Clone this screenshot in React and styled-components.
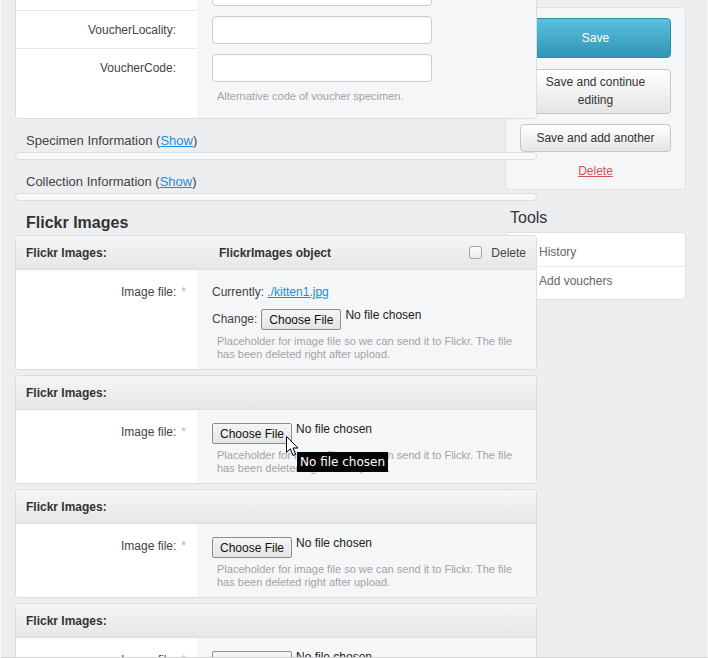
import React from "react";
import styled, { createGlobalStyle } from "styled-components";

const GlobalStyle = createGlobalStyle`
  html, body {
    margin: 0;
    padding: 0;
    height: 658px;
    overflow: hidden;
  }
  body {
    background: #edeef0;
    font-family: "Liberation Sans", Arial, sans-serif;
    font-size: 12px;
    color: #444;
  }
  * {
    box-sizing: border-box;
  }
`;

const Frame = styled.div`
  height: 658px;
  overflow: hidden;
  border-left: 1px solid #f8f8f9;
  border-right: 1px solid #f6f6f7;
  border-bottom: 1px solid #d3d4d6;
`;

const Columns = styled.div`
  display: flex;
  align-items: flex-start;
  margin-top: -29px;
  padding-left: 14px;
`;

const Main = styled.div`
  width: 522px;
  flex-shrink: 0;
  position: relative;
  z-index: 1;
`;

const Sidebar = styled.div`
  width: 181px;
  flex-shrink: 0;
  margin-left: -32px;
  margin-top: 36px;
`;

/* fieldset module */
const Module = styled.div`
  background: #fff;
  border: 1px solid #dcdde0;
  border-radius: 4px;
  overflow: hidden;
`;

const FormRow = styled.div`
  display: grid;
  grid-template-columns: 181px 1fr;
`;

const LabelCell = styled.div`
  background: #fff;
  text-align: right;
  line-height: 14px;
  color: #444;
  padding: ${(p) => (p.$inline ? "15px 11px 0 0" : "12px 21px 0 0")};
  border-top: ${(p) => (p.$first ? "none" : "1px solid #e6e7e9")};
`;

const Required = styled.span`
  color: #b5b5b5;
  margin-left: 5px;
`;

const FieldCell = styled.div`
  background: #f5f6f8;
  padding: ${(p) => (p.$inline ? "13px 15px 9px 15px" : "6px 15px 4px 15px")};
  padding-bottom: ${(p) => (p.$help && !p.$inline ? "15px" : undefined)};
`;

const TextInput = styled.input`
  display: block;
  width: 220px;
  height: 28px;
  border: 1px solid #cbccce;
  border-radius: 4px;
  background: #fff;
  box-shadow: inset 0 1px 1px rgba(0, 0, 0, 0.04);
  font: inherit;
  padding: 0 6px;
  margin: 0;
`;

const Help = styled.div`
  font-size: 11px;
  color: #a2a3a5;
  padding-left: 5px;
  margin-top: ${(p) => (p.$inline ? "5px" : "7px")};
  line-height: ${(p) => (p.$inline ? "12.5px" : "14px")};
`;

/* collapsed fieldsets */
const SectionTitle = styled.div`
  margin: 13px 0 3px 11px;
  font-size: 13px;
  line-height: 17px;
  color: #444;
`;

const Link = styled.a`
  color: #1b8dd4;
  text-decoration: underline;
  cursor: pointer;
`;

const CollapsedBar = styled.div`
  height: 8px;
  background: #f7f8f9;
  border: 1px solid #dcdde0;
  border-radius: 4px;
`;

const GroupHeading = styled.h2`
  margin: 12px 0 2px 11px;
  font-size: 16px;
  line-height: 20px;
  font-weight: bold;
  color: #333;
`;

/* inline groups */
const Inline = styled.div`
  background: #fff;
  border: 1px solid #dcdde0;
  border-radius: 4px;
  overflow: hidden;
  margin-bottom: 5px;
`;

const InlineHeader = styled.div`
  display: flex;
  align-items: center;
  height: 34px;
  padding: 0 10px 0 10px;
  background: linear-gradient(#f6f6f6, #e6e6e6);
  border-bottom: 1px solid #dcdde0;
  font-weight: bold;
  color: #333;
`;

const InlineTitle = styled.span`
  flex: 0 0 193px;
`;

const InlineObject = styled.span`
  flex: 1;
`;

const DeleteToggle = styled.label`
  display: flex;
  align-items: center;
  font-weight: normal;
  color: #444;
`;

const CheckBox = styled.span`
  width: 13px;
  height: 13px;
  margin-right: 9px;
  border: 1px solid #a5a6a8;
  border-radius: 3px;
  background: linear-gradient(#fafafa, #ebebeb);
`;

const Currently = styled.div`
  line-height: 18px;
  color: #444;
`;

const FileRow = styled.div`
  position: relative;
  display: flex;
  align-items: flex-start;
  margin-top: ${(p) => (p.$afterText ? "8px" : "0")};
`;

const ChangeLabel = styled.span`
  line-height: 21px;
  margin-right: 4px;
  color: #444;
`;

const FileButton = styled.button`
  height: 21px;
  width: 80px;
  padding: 0;
  border: 1px solid #8d8d8d;
  border-radius: 2px;
  background: linear-gradient(#f5f5f5, #e4e4e4);
  font-family: "Liberation Sans", Arial, sans-serif;
  font-size: 12px;
  color: #111;
`;

const FileStatus = styled.span`
  margin-left: 4px;
  line-height: 13px;
  color: #222;
`;

const Tooltip = styled.div`
  position: absolute;
  left: 85px;
  top: 29px;
  height: 20px;
  padding: 0 3px;
  background: #050505;
  color: #fff;
  font-family: "DejaVu Sans", sans-serif;
  font-size: 12px;
  line-height: 20px;
  white-space: nowrap;
  z-index: 2;
`;

const Pointer = styled.svg`
  position: absolute;
  left: 74px;
  top: 13px;
  z-index: 3;
`;

/* sidebar */
const SavePanel = styled.div`
  display: flex;
  flex-direction: column;
  background: #f5f6f8;
  border: 1px solid #dfe0e2;
  border-radius: 4px;
  padding: 10px 14px 10px 14px;
`;

const PrimaryButton = styled.button`
  height: 40px;
  margin: 0 0 11px;
  border: 1px solid #2b8eab;
  border-radius: 4px;
  background: linear-gradient(#5bc1df, #2f95b3);
  color: #fff;
  font-family: "Liberation Sans", Arial, sans-serif;
  font-size: 12px;
`;

const Button = styled.button`
  margin: 0 0 10px;
  padding: 4px 12px;
  border: 1px solid #c6c7c9;
  border-radius: 4px;
  background: linear-gradient(#ffffff, #e5e5e5);
  color: #333;
  font-family: "Liberation Sans", Arial, sans-serif;
  font-size: 12px;
  line-height: ${(p) => (p.$wrap ? "17.5px" : "18px")};
`;

const DeleteLink = styled.a`
  margin-top: 1px;
  text-align: center;
  line-height: 16px;
  color: #d6504c;
  text-decoration: underline;
`;

const ToolsTitle = styled.h3`
  margin: 18px 0 5px 5px;
  font-size: 16px;
  line-height: 19px;
  font-weight: normal;
  color: #333;
`;

const ToolsBox = styled.ul`
  list-style: none;
  margin: 0;
  padding: 5px 0 4px;
  background: #fff;
  border: 1px solid #dfe0e2;
  border-radius: 4px;
`;

const ToolItem = styled.li`
  line-height: 28px;
  padding-left: 33px;
  color: #666;
  & + & {
    border-top: 1px solid #e8e9eb;
  }
`;

const CursorArrow = () => (
  <Pointer width="14" height="22" viewBox="0 0 14 22">
    <path
      d="M0.5 0.5 L0.5 16.5 L4.3 12.8 L7 19.5 L9.6 18.4 L7 12 L12 12 Z"
      fill="#fff"
      stroke="#000"
      strokeWidth="1"
      strokeLinejoin="round"
    />
  </Pointer>
);

const voucherRows = [
  { label: "VoucherCollector:" },
  { label: "VoucherLocality:" },
  { label: "VoucherCode:", help: "Alternative code of voucher specimen." },
];

const inlineHelp =
  "Placeholder for image file so we can send it to Flickr. The file has been deleted right after upload.";

const FlickrInline = ({ existing, hovered }) => (
  <Inline>
    <InlineHeader>
      <InlineTitle>Flickr Images:</InlineTitle>
      {existing && (
        <>
          <InlineObject>FlickrImages object</InlineObject>
          <DeleteToggle>
            <CheckBox />
            Delete
          </DeleteToggle>
        </>
      )}
    </InlineHeader>
    <FormRow>
      <LabelCell $inline $first>
        Image file:<Required>*</Required>
      </LabelCell>
      <FieldCell $inline>
        {existing && (
          <Currently>
            Currently: <Link>./kitten1.jpg</Link>
          </Currently>
        )}
        <FileRow $afterText={existing}>
          {existing && <ChangeLabel>Change:</ChangeLabel>}
          <FileButton>Choose File</FileButton>
          <FileStatus>No file chosen</FileStatus>
          {hovered && (
            <>
              <CursorArrow />
              <Tooltip>No file chosen</Tooltip>
            </>
          )}
        </FileRow>
        <Help $inline>{inlineHelp}</Help>
      </FieldCell>
    </FormRow>
  </Inline>
);

const App = () => {
  return (
    <>
      <GlobalStyle />
      <Frame>
        <Columns>
          <Main>
            <Module>
              {voucherRows.map((row, i) => (
                <FormRow key={row.label}>
                  <LabelCell $first={i === 0}>{row.label}</LabelCell>
                  <FieldCell $help={!!row.help}>
                    <TextInput type="text" />
                    {row.help && <Help>{row.help}</Help>}
                  </FieldCell>
                </FormRow>
              ))}
            </Module>

            <SectionTitle>
              Specimen Information (<Link>Show</Link>)
            </SectionTitle>
            <CollapsedBar />
            <SectionTitle>
              Collection Information (<Link>Show</Link>)
            </SectionTitle>
            <CollapsedBar />

            <GroupHeading>Flickr Images</GroupHeading>
            <FlickrInline existing />
            <FlickrInline hovered />
            <FlickrInline />
            <FlickrInline />
          </Main>

          <Sidebar>
            <SavePanel>
              <PrimaryButton>Save</PrimaryButton>
              <Button $wrap>Save and continue editing</Button>
              <Button>Save and add another</Button>
              <DeleteLink>Delete</DeleteLink>
            </SavePanel>
            <ToolsTitle>Tools</ToolsTitle>
            <ToolsBox>
              <ToolItem>History</ToolItem>
              <ToolItem>Add vouchers</ToolItem>
            </ToolsBox>
          </Sidebar>
        </Columns>
      </Frame>
    </>
  );
};

export default App;
